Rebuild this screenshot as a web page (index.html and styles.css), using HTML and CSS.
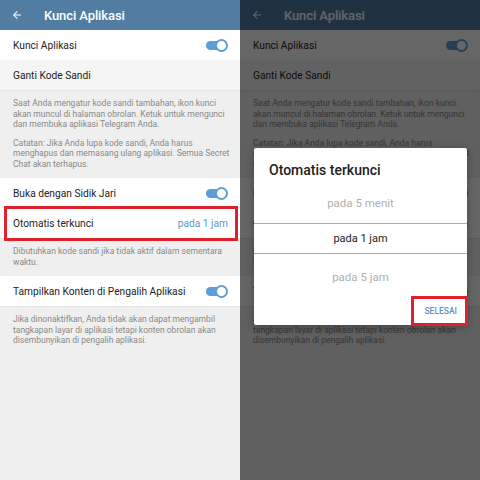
FILE: index.html
```html
<!DOCTYPE html>
<html lang="id">
<head>
  <meta charset="UTF-8" />
  <title>Kunci Aplikasi</title>
  <link rel="stylesheet" href="styles.css">
</head>
<body>
  <div class="screens">

    <section class="phone">
      <header class="bar">
        <svg class="back" width="12" height="12" viewBox="0 0 24 24"><path d="M20 11H7.8l5.6-5.6L12 4l-8 8 8 8 1.4-1.4L7.8 13H20z" fill="#fff"/></svg>
        <span>Kunci Aplikasi</span>
      </header>
      <div class="row"><span>Kunci Aplikasi</span><span class="toggle"></span></div>
      <div class="row dim">Ganti Kode Sandi</div>
      <div class="info">
        <p>Saat Anda mengatur kode sandi tambahan, ikon kunci akan muncul di halaman obrolan. Ketuk untuk mengunci dan membuka aplikasi Telegram Anda.</p>
        <p>Catatan: Jika Anda lupa kode sandi, Anda harus menghapus dan memasang ulang aplikasi. Semua Secret Chat akan terhapus.</p>
      </div>
      <div class="row"><span>Buka dengan Sidik Jari</span><span class="toggle"></span></div>
      <div class="row marked"><span>Otomatis terkunci</span><span class="value">pada 1 jam</span></div>
      <div class="info">
        <p>Dibutuhkan kode sandi jika tidak aktif dalam sementara waktu.</p>
      </div>
      <div class="row"><span>Tampilkan Konten di Pengalih Aplikasi</span><span class="toggle"></span></div>
      <div class="info fill">
        <p>Jika dinonaktifkan, Anda tidak akan dapat mengambil tangkapan layar di aplikasi tetapi konten obrolan akan disembunyikan di pengalih aplikasi.</p>
      </div>
    </section>

    <section class="phone shaded">
      <header class="bar">
        <svg class="back" width="12" height="12" viewBox="0 0 24 24"><path d="M20 11H7.8l5.6-5.6L12 4l-8 8 8 8 1.4-1.4L7.8 13H20z" fill="#fff"/></svg>
        <span>Kunci Aplikasi</span>
      </header>
      <div class="row"><span>Kunci Aplikasi</span><span class="toggle"></span></div>
      <div class="row dim">Ganti Kode Sandi</div>
      <div class="info">
        <p>Saat Anda mengatur kode sandi tambahan, ikon kunci akan muncul di halaman obrolan. Ketuk untuk mengunci dan membuka aplikasi Telegram Anda.</p>
        <p>Catatan: Jika Anda lupa kode sandi, Anda harus menghapus dan memasang ulang aplikasi. Semua Secret Chat akan terhapus.</p>
      </div>
      <div class="row"><span>Buka dengan Sidik Jari</span><span class="toggle"></span></div>
      <div class="row"><span>Otomatis terkunci</span><span class="value">pada 1 jam</span></div>
      <div class="info">
        <p>Dibutuhkan kode sandi jika tidak aktif dalam sementara waktu.</p>
      </div>
      <div class="row"><span>Tampilkan Konten di Pengalih Aplikasi</span><span class="toggle"></span></div>
      <div class="info fill">
        <p>Jika dinonaktifkan, Anda tidak akan dapat mengambil tangkapan layar di aplikasi tetapi konten obrolan akan disembunyikan di pengalih aplikasi.</p>
      </div>

      <div class="overlay"></div>
      <div class="dialog">
        <h3>Otomatis terkunci</h3>
        <div class="picker">
          <div class="pick">pada 5 menit</div>
          <div class="pick current">pada 1 jam</div>
          <div class="pick">pada 5 jam</div>
        </div>
        <div class="actions">
          <button class="done">SELESAI</button>
        </div>
      </div>
    </section>

  </div>
</body>
</html>
```

FILE: styles.css
```css
body {
  margin: 0;
  font-family: Roboto, 'Noto Sans', sans-serif;
  background-color: #efefef;
}

.screens {
  display: grid;
  grid-template-columns: 240px 240px;
  height: 480px;
  overflow: hidden;
}

.phone {
  position: relative;
  display: flex;
  flex-direction: column;
  background-color: #efefef;
  height: 480px;
  overflow: hidden;
}

.bar {
  height: 30px;
  flex-shrink: 0;
  background-color: #527da3;
  display: flex;
  align-items: center;
  color: #fff;
  font-size: 13px;
  font-weight: 500;
  letter-spacing: -0.1px;
}

.bar .back {
  margin-left: 11px;
  margin-right: 21px;
}

.row {
  height: 30px;
  flex-shrink: 0;
  background-color: #fff;
  display: flex;
  align-items: center;
  justify-content: space-between;
  padding: 0 12px 0 13px;
  font-size: 10.2px;
  color: #222;
  position: relative;
}

.row.dim {
  background-color: #f5f5f5;
}

.row .value {
  color: #5b97cc;
}

.row.marked::after {
  content: '';
  position: absolute;
  top: -2px;
  bottom: -3px;
  left: 4px;
  right: 2px;
  border: 3px solid #e0202b;
}

.toggle {
  position: relative;
  width: 19px;
  height: 9px;
  margin-right: 3px;
  border-radius: 5px;
  background-color: #5d9ed6;
}

.toggle::after {
  content: '';
  position: absolute;
  right: -3px;
  top: -2px;
  width: 13px;
  height: 13px;
  border-radius: 50%;
  background-color: #fff;
  border: 2px solid #5d9ed6;
  box-sizing: border-box;
}

.info {
  padding: 8px 10px 9px 13px;
  font-size: 8.5px;
  line-height: 10.5px;
  color: #8a8a8a;
  box-shadow: inset 0 1px 1px rgba(0,0,0,0.05);
}

.info p {
  margin: 0;
}

.info p + p {
  margin-top: 8px;
}

.info.fill {
  flex: 1;
}

.overlay {
  position: absolute;
  inset: 0;
  background-color: rgba(0,0,0,0.6);
}

.dialog {
  position: absolute;
  left: 14px;
  top: 148px;
  width: 213px;
  height: 177px;
  box-sizing: border-box;
  background-color: #fff;
  border-radius: 2px;
  box-shadow: 0 2px 8px rgba(0,0,0,0.3);
  padding-top: 14px;
  display: flex;
  flex-direction: column;
}

.dialog h3 {
  margin: 0 0 5px 15px;
  font-size: 14px;
  line-height: 17px;
  font-weight: 500;
  color: #222;
}

.picker {
  display: flex;
  flex-direction: column;
}

.pick {
  height: 37px;
  display: flex;
  align-items: center;
  justify-content: center;
  font-size: 11.5px;
  color: #b0b0b0;
}

.pick.current {
  height: 29px;
  margin: 2px 0 4px;
  border-top: 1px solid #86b4dc;
  border-bottom: 1px solid #86b4dc;
  color: #222;
  font-size: 11px;
}

.actions {
  flex: 1;
  display: flex;
  justify-content: flex-end;
  align-items: center;
}

.done {
  width: 57px;
  height: 30px;
  margin: 1px -1px 0 0;
  box-sizing: border-box;
  border: 3px solid #e0202b;
  background: none;
  padding: 0 8px 0 0;
  text-align: right;
  font-family: Roboto, sans-serif;
  font-size: 8.5px;
  font-weight: 500;
  color: #5a94c6;
}
```
